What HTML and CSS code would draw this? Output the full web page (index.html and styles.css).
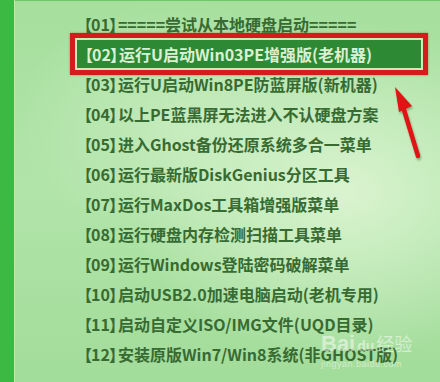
FILE: index.html
```html
<!DOCTYPE html>
<html lang="zh-CN">
<head>
<meta charset="utf-8">
<link rel="stylesheet" href="styles.css">
</head>
<body>
<div class="screen">
  <div class="stripe"></div>
  <div class="panel">
    <ul class="menu">
      <li class="item"><span class="bl">【</span>01<span class="br">】</span>=====尝试从本地硬盘启动=====</li>
      <li class="item sel"><div class="sel-gap"><div class="sel-fill"><span class="bl">【</span>02<span class="br">】</span>运行U启动Win03PE增强版(老机器)</div></div></li>
      <li class="item"><span class="bl">【</span>03<span class="br">】</span>运行U启动Win8PE防蓝屏版(新机器)</li>
      <li class="item"><span class="bl">【</span>04<span class="br">】</span>以上PE蓝黑屏无法进入不认硬盘方案</li>
      <li class="item"><span class="bl">【</span>05<span class="br">】</span>进入Ghost备份还原系统多合一菜单</li>
      <li class="item"><span class="bl">【</span>06<span class="br">】</span>运行最新版DiskGenius分区工具</li>
      <li class="item"><span class="bl">【</span>07<span class="br">】</span>运行MaxDos工具箱增强版菜单</li>
      <li class="item"><span class="bl">【</span>08<span class="br">】</span>运行硬盘内存检测扫描工具菜单</li>
      <li class="item"><span class="bl">【</span>09<span class="br">】</span>运行Windows登陆密码破解菜单</li>
      <li class="item"><span class="bl">【</span>10<span class="br">】</span>启动USB2.0加速电脑启动(老机专用)</li>
      <li class="item"><span class="bl">【</span>11<span class="br">】</span>启动自定义ISO/IMG文件(UQD目录)</li>
      <li class="item"><span class="bl">【</span>12<span class="br">】</span>安装原版Win7/Win8系统(非GHOST版)</li>
    </ul>
    <svg class="arrow" width="40" height="90" viewBox="0 0 40 90">
      <line x1="31" y1="82" x2="14" y2="26" stroke="#e01414" stroke-width="4.5" stroke-linecap="round"/>
      <polygon points="8,13 25,32 12,38" fill="#e01414"/>
    </svg>
    <div class="watermark">
      <div class="wm-logo"><span class="wm-bai">Bai</span><span class="wm-paw">du</span><span class="wm-jy">经验</span></div>
      <div class="wm-url">jingyan.baidu.com</div>
    </div>
  </div>
</div>
</body>
</html>
```
FILE: styles.css
```css
html, body {
  margin: 0;
  padding: 0;
}
body {
  width: 440px;
  height: 382px;
  overflow: hidden;
  font-family: "Noto Sans CJK SC", "Noto Sans", sans-serif;
}
.screen {
  display: flex;
  width: 440px;
  height: 382px;
}
.stripe {
  width: 14px;
  flex: none;
  background: #3cb942;
  border-right: 1px solid #b9eab2;
}
.panel {
  position: relative;
  flex: 1;
  border-top: 1px solid #6cc866;
  background:
    radial-gradient(ellipse 220px 170px at 330px 190px, rgba(222,245,212,0.9), rgba(222,245,212,0) 100%),
    radial-gradient(ellipse 160px 120px at 160px 120px, rgba(205,238,195,0.7), rgba(205,238,195,0) 100%),
    linear-gradient(180deg, #a6df9e 0%, #b1e4a9 50%, #a2dc9a 100%);
  overflow: hidden;
}
.menu {
  list-style: none;
  margin: 0;
  padding: 8px 0 0 55px;
}
.item {
  height: 30px;
  line-height: 30px;
  font-size: 16px;
  font-weight: 700;
  color: #386b32;
  white-space: nowrap;
  padding-left: 14px;
}
.bl {
  display: inline-block;
  margin-left: -8px;
  margin-right: -1px;
}
.br {
  display: inline-block;
  margin-right: -7px;
  margin-left: -1px;
}
.item.sel {
  padding-left: 0;
  margin: -6px 12px -6px 0;
  height: 32px;
  border: 5px solid #d41c1c;
  line-height: 28px;
  box-shadow: 0 0 2px rgba(200,60,40,0.6);
}
.sel-gap {
  height: 100%;
  box-sizing: border-box;
  padding: 2px;
  background: #cfe9b8;
}
.sel-fill {
  height: 28px;
  background: #2e8935;
  color: #d9f1d2;
  padding-left: 8px;
}
.arrow {
  position: absolute;
  left: 372px;
  top: 73px;
  filter: drop-shadow(1px 2px 1px rgba(60,90,40,0.45));
}
.watermark {
  position: absolute;
  left: 306px;
  top: 330px;
  color: rgba(255,255,255,0.5);
  font-family: "Liberation Sans", "Noto Sans CJK SC", sans-serif;
}
.wm-logo {
  display: flex;
  align-items: baseline;
  font-size: 22px;
  font-weight: 700;
  line-height: 26px;
}
.wm-paw {
  font-size: 14px;
  margin: 0 2px;
}
.wm-jy {
  font-size: 18px;
  font-weight: 400;
}
.wm-url {
  font-size: 9px;
  line-height: 11px;
  letter-spacing: 0.5px;
}
```
